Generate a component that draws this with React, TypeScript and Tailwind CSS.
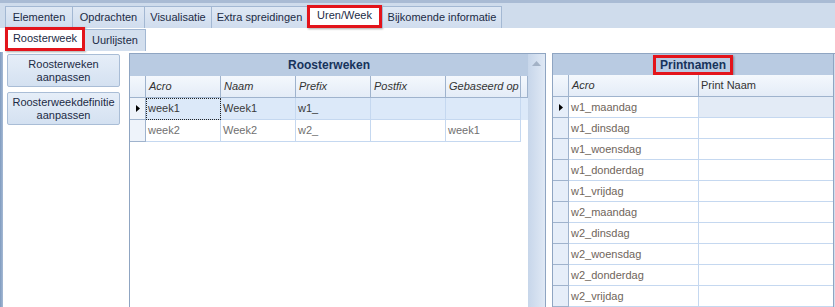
import React from 'react'

type Tab = { label: string; w: string; active?: boolean }

const mainTabs: Tab[] = [
  { label: 'Elementen', w: 'w-[67px]' },
  { label: 'Opdrachten', w: 'w-[72px]' },
  { label: 'Visualisatie', w: 'w-[67px]' },
  { label: 'Extra spreidingen', w: 'w-[96px]' },
  { label: 'Uren/Week', w: 'w-[75px]', active: true },
  { label: 'Bijkomende informatie', w: 'w-[120px]' },
]

const weeks = [
  { acro: 'week1', naam: 'Week1', prefix: 'w1_', postfix: '', base: '' },
  { acro: 'week2', naam: 'Week2', prefix: 'w2_', postfix: '', base: 'week1' },
]

const printnamen = [
  'w1_maandag',
  'w1_dinsdag',
  'w1_woensdag',
  'w1_donderdag',
  'w1_vrijdag',
  'w2_maandag',
  'w2_dinsdag',
  'w2_woensdag',
  'w2_donderdag',
  'w2_vrijdag',
]

function RowArrow() {
  return (
    <svg width="4" height="7" viewBox="0 0 4 7">
      <path d="M0 0 L4 3.5 L0 7 Z" fill="#000" />
    </svg>
  )
}

function RedBox({ children, className }: { children: React.ReactNode; className: string }) {
  return (
    <div className={`border-[3px] border-[#e3141b] shadow-[1px_1px_2px_rgba(0,0,0,0.35)] bg-white flex items-center justify-center ${className}`}>
      {children}
    </div>
  )
}

export default function App() {
  return (
    <div className="w-[835px] h-[307px] overflow-hidden bg-white flex flex-col font-['Liberation_Sans',Arial,sans-serif] text-[11px] text-[#1c2b45]">
      {/* hoofdtabs */}
      <div className="h-[28px] shrink-0 bg-[#cfdcec] border-t-[3px] border-[#a9bbd4] flex items-end pl-[5px]">
        {mainTabs.map((t, i) =>
          t.active ? (
            <RedBox key={t.label} className={`${t.w} h-[23px] pb-[2px]`}>
              {t.label}
            </RedBox>
          ) : (
            <div
              key={t.label}
              className={`${t.w} h-[22px] flex items-center justify-center bg-gradient-to-b from-[#dfe8f4] to-[#d0ddee] border-t border-l border-[#a3b8d3] ${i === mainTabs.length - 1 ? 'border-r' : ''}`}
            >
              {t.label}
            </div>
          )
        )}
      </div>

      {/* subtabs */}
      <div className="h-[24px] shrink-0 flex items-end pl-[5px] pb-[1px]">
        <RedBox className="w-[80px] h-[24px] pb-[1px]">Roosterweek</RedBox>
        <div className="w-[61px] h-[22px] flex items-center justify-center bg-[#d3dfee] border-t border-r border-[#a3b8d3]">
          Uurlijsten
        </div>
      </div>

      {/* inhoud */}
      <div className="flex-1 flex min-h-0">
        <div className="w-[3px] bg-gradient-to-r from-[#7f9bc0] to-[#a6bad4]" />

        {/* knoppen */}
        <div className="w-[126px] flex flex-col gap-[5px] pl-[4px] pt-[2px]">
          {['Roosterweken aanpassen', 'Roosterweekdefinitie aanpassen'].map((b) => (
            <div
              key={b}
              className="w-[113px] h-[33px] rounded-[2px] border border-[#a9bdd6] bg-gradient-to-b from-[#e6eef8] to-[#d4e1f1] flex items-center justify-center text-center leading-[13px] px-1"
            >
              {b.split(' ').map((w) => (
                <React.Fragment key={w}>
                  {w}
                  <br />
                </React.Fragment>
              ))}
            </div>
          ))}
        </div>

        {/* grid roosterweken */}
        <div className="w-[417px] mt-[1px] border-l border-t border-r border-[#8fa5c2] flex">
          <div className="w-[398px] flex flex-col">
            <div className="h-[22px] bg-[#b9cbe2] flex items-center justify-center font-bold text-[12px] text-[#17335b]">
              Roosterweken
            </div>
            <div className="h-[22px] flex border-b border-[#9fb3cd] bg-gradient-to-b from-[#f4f8fd] to-[#e4ecf7] italic text-[#333]">
              <div className="w-[16px] border-r border-[#9fb3cd]" />
              {['Acro', 'Naam', 'Prefix', 'Postfix', 'Gebaseerd op'].map((h) => (
                <div key={h} className="w-[75px] border-r border-[#9fb3cd] pl-[3px] flex items-center">
                  {h}
                </div>
              ))}
              <div className="w-[7px] border-r border-[#9fb3cd]" />
            </div>
            {weeks.map((r, i) => {
              const sel = i === 0
              return (
                <div
                  key={r.acro}
                  className={`h-[22px] flex ${sel ? 'bg-[#dce9f9] text-[#3a3a3a]' : 'bg-white text-[#707070]'}`}
                >
                  <div className="w-[16px] border-r border-b border-[#9fb3cd] bg-[#eef3fa] flex items-center justify-center">
                    {sel && <RowArrow />}
                  </div>
                  {[r.acro, r.naam, r.prefix, r.postfix, r.base].map((c, j) => (
                    <div
                      key={j}
                      className={`w-[75px] border-r border-b border-[#c5d8f0] pl-[2px] flex items-center ${sel && j === 0 ? 'outline-1 outline-dotted outline-[#222] -outline-offset-1' : ''}`}
                    >
                      {c}
                    </div>
                  ))}
                </div>
              )
            })}
          </div>
          {/* scrollbar */}
          <div className="w-[17px] bg-gradient-to-r from-[#c7d6ea] to-[#e0e9f5] flex justify-center pt-[7px]">
            <svg width="9" height="5" viewBox="0 0 9 5">
              <path d="M0 5 L4.5 0 L9 5 Z" fill="#a3b2c6" />
            </svg>
          </div>
        </div>

        <div className="w-[6px]" />

        {/* grid printnamen */}
        <div className="w-[283px] mt-[1px] border-l border-t border-[#8fa5c2] flex">
          <div className="w-[281px] flex flex-col border-r border-[#8fa5c2]">
            <div className="h-[22px] bg-[#b9cbe2] flex items-center justify-center">
              <RedBox className="w-[80px] h-[20px] bg-transparent! font-bold text-[12px] text-[#17335b]">
                Printnamen
              </RedBox>
            </div>
            <div className="h-[22px] shrink-0 flex border-b border-[#9fb3cd] bg-gradient-to-b from-[#f4f8fd] to-[#e4ecf7] text-[#333]">
              <div className="w-[16px] border-r border-[#9fb3cd]" />
              <div className="w-[130px] border-r border-[#9fb3cd] pl-[3px] flex items-center italic">Acro</div>
              <div className="flex-1 pl-[2px] flex items-center">Print Naam</div>
            </div>
            {printnamen.map((p, i) => (
              <div key={p} className="h-[21px] shrink-0 flex text-[#6f655b]">
                <div className="w-[16px] border-r border-b border-[#9fb3cd] bg-[#e6eef9] flex items-center justify-center">
                  {i === 0 && <RowArrow />}
                </div>
                <div className="w-[130px] border-r border-b border-[#c5d8f0] pl-[2px] flex items-center bg-white">
                  {p}
                </div>
                <div className={`flex-1 border-b border-[#c5d8f0] ${i === 0 ? 'bg-[#e3ebf6]' : 'bg-white'}`} />
              </div>
            ))}
          </div>
          <div className="flex-1 bg-[#d3dfee]" />
        </div>
      </div>
    </div>
  )
}
